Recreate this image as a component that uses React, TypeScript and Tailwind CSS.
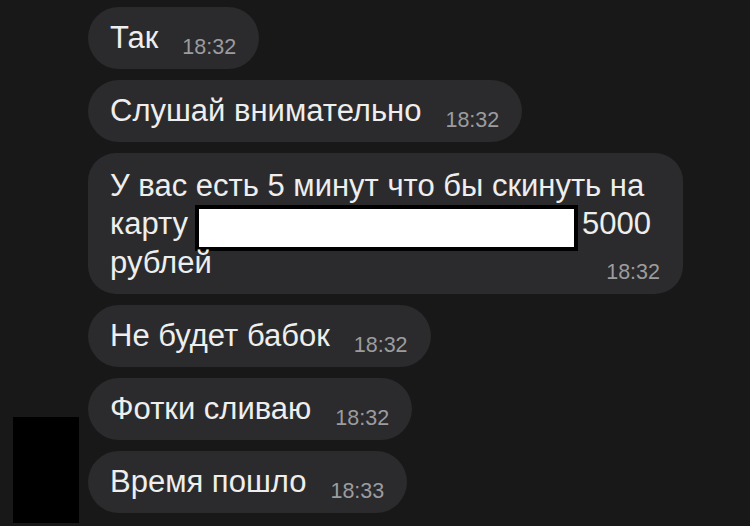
const font = { fontFamily: '"Liberation Sans", Arial, sans-serif' };

function Time({ t }: { t: string }) {
  return (
    <span className="inline-block translate-y-[6px] text-[21.5px] leading-[20px] text-[#9c9c9e]">
      {t}
    </span>
  );
}

function Bubble({ text, time }: { text: string; time: string }) {
  return (
    <div className="flex w-fit items-baseline rounded-full bg-[#2b2b2d] py-[14px] pl-[22px] pr-[23px]">
      <span className="text-[31px] leading-[34px] text-[#eeeeee]">{text}</span>
      <span className="ml-[24px]">
        <Time t={time} />
      </span>
    </div>
  );
}

export default function App() {
  return (
    <div
      className="flex h-[526px] w-[750px] overflow-hidden bg-[#181818]"
      style={font}
    >
      <div className="mb-[3px] ml-[13px] h-[106px] w-[66px] shrink-0 self-end bg-black" />

      <div className="ml-[9px] flex flex-col gap-[11px] pt-[7px]">
        <Bubble text="Так" time="18:32" />
        <Bubble text="Слушай внимательно" time="18:32" />

        <div className="w-[595px] rounded-[28px] bg-[#2b2b2d] pb-[12px] pl-[22px] pr-[22px] pt-[14px] text-[31px] leading-[38px] text-[#eeeeee]">
          <div className="h-[38px] whitespace-nowrap">
            У вас есть 5 минут что бы скинуть на
          </div>
          <div className="flex h-[39px] items-start whitespace-nowrap">
            <span className="w-[85px]">карту</span>
            <span className="h-[46px] w-[383px] shrink-0 border-[4px] border-black bg-white" />
            <span className="ml-[4px]">5000</span>
          </div>
          <div className="flex h-[38px] items-baseline justify-between">
            <span>рублей</span>
            <span className="mr-[1px]">
              <Time t="18:32" />
            </span>
          </div>
        </div>

        <Bubble text="Не будет бабок" time="18:32" />
        <Bubble text="Фотки сливаю" time="18:32" />
        <Bubble text="Время пошло" time="18:33" />
      </div>
    </div>
  );
}
